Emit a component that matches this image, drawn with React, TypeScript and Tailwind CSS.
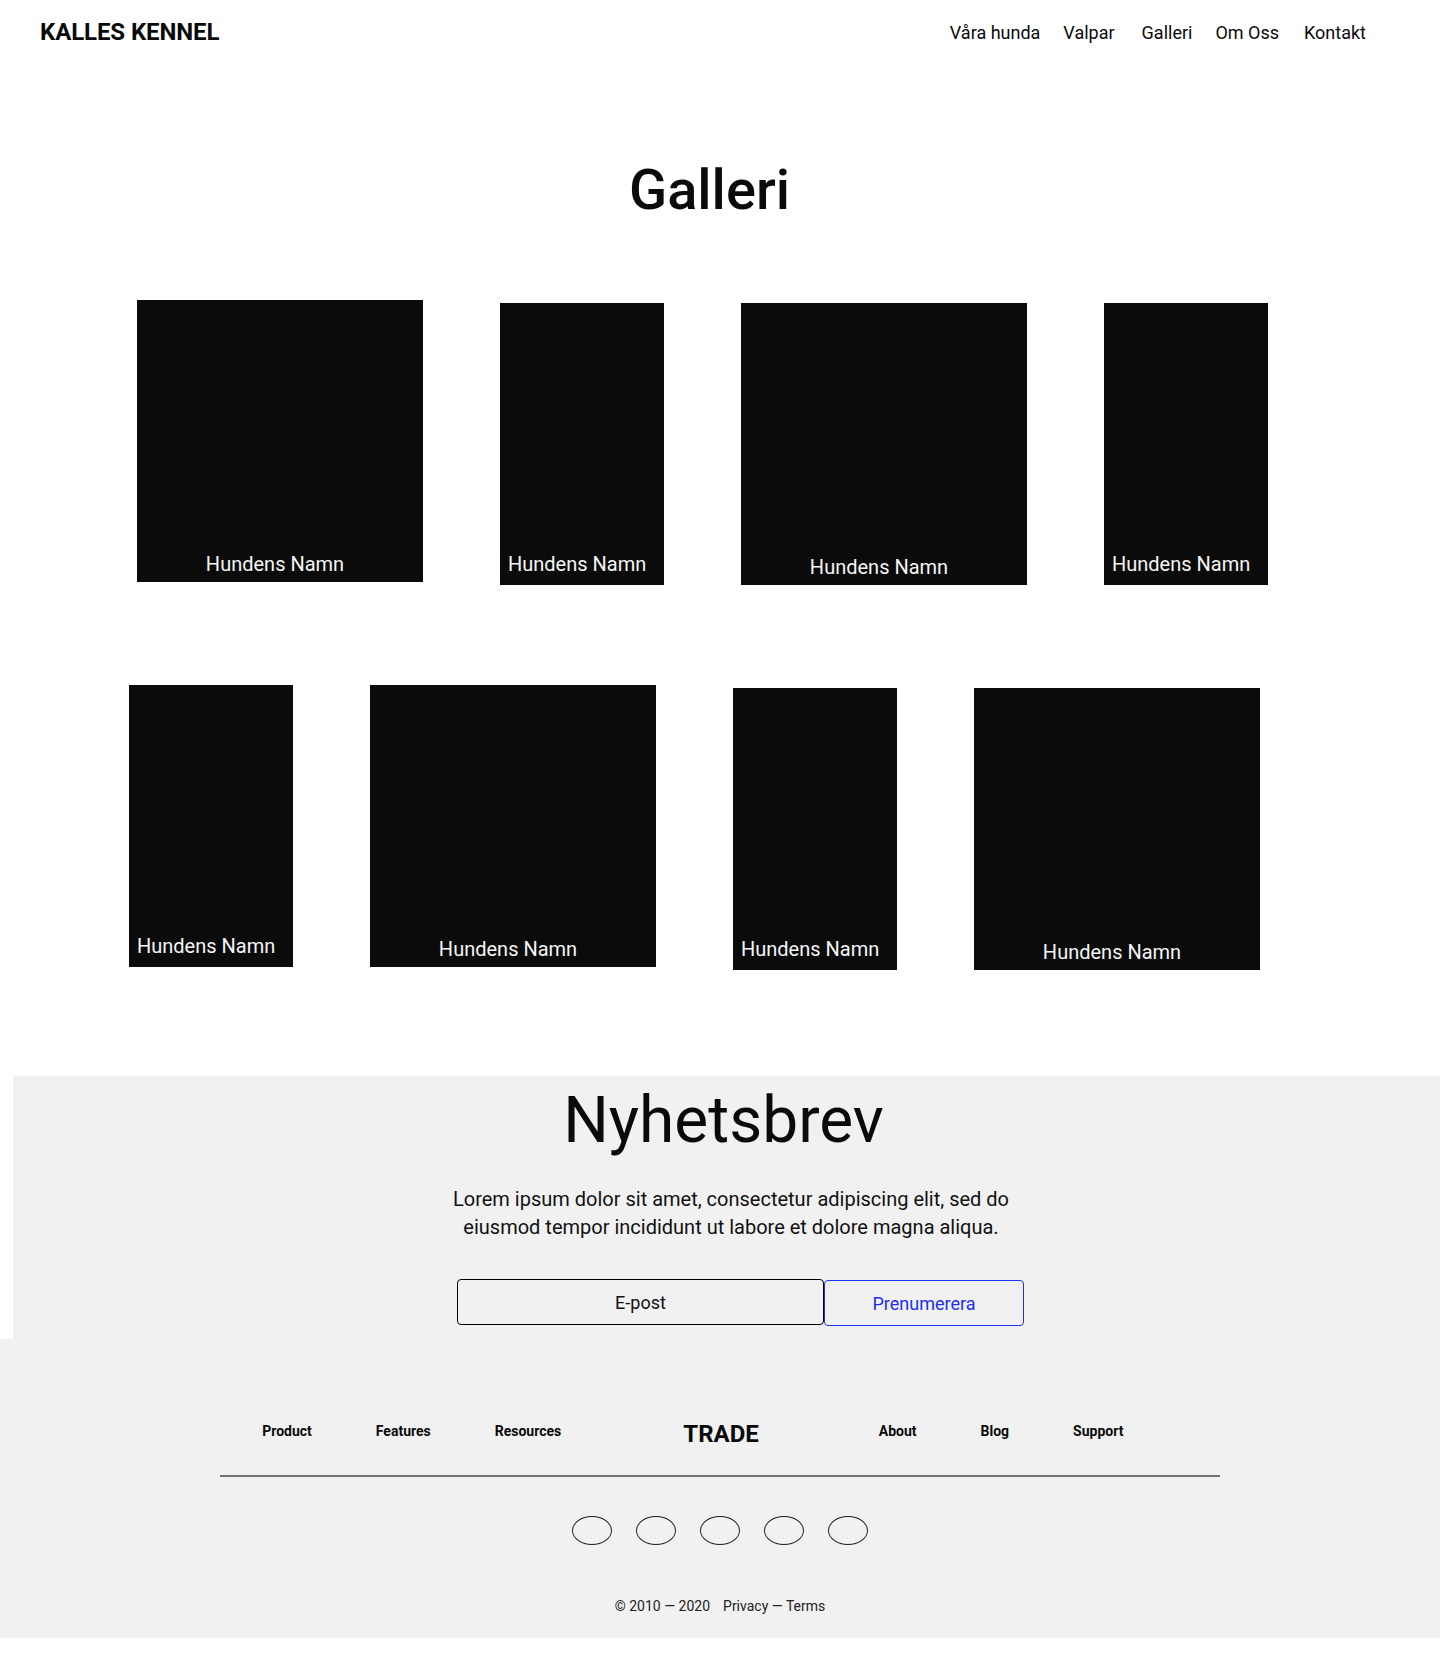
const nav = [
  { label: "Våra hunda", cls: "" },
  { label: "Valpar", cls: "ml-[23px]" },
  { label: "Galleri", cls: "ml-[27px]" },
  { label: "Om Oss", cls: "ml-[23px]" },
  { label: "Kontakt", cls: "ml-[25px]" },
];

type Dog = { wide: boolean; center: boolean; drop: boolean };

const rowOne: Dog[] = [
  { wide: true, center: true, drop: false },
  { wide: false, center: false, drop: true },
  { wide: true, center: true, drop: true },
  { wide: false, center: false, drop: true },
];

const rowTwo: Dog[] = [
  { wide: false, center: false, drop: false },
  { wide: true, center: true, drop: false },
  { wide: false, center: false, drop: true },
  { wide: true, center: true, drop: true },
];

function DogCard({ dog }: { dog: Dog }) {
  return (
    <div
      className={`flex h-[282px] flex-none flex-col justify-end bg-[#0b0b0b] ${
        dog.wide ? "w-[286px]" : "w-[164px]"
      } ${dog.drop ? "mt-[3px]" : ""}`}
    >
      <div
        className={`text-[20px] leading-none text-[#f5f5f5] ${
          dog.center ? "pb-[8px] pr-[10px] text-center" : "pb-[11px] pl-[8px]"
        }`}
      >
        Hundens Namn
      </div>
    </div>
  );
}

export default function App() {
  return (
    <div className="min-h-[1658px] bg-white font-['Roboto',sans-serif] text-[#0a0a0a]">
      {/* Sidhuvud */}
      <header className="flex items-start justify-between pl-[40px] pr-[74px] pt-[20px]">
        <div className="text-[24px] font-bold leading-none tracking-[-0.1px]">KALLES KENNEL</div>
        <nav className="mt-[4px] flex items-baseline text-[18px] leading-none">
          {nav.map((n) => (
            <span key={n.label} className={n.cls}>
              {n.label}
            </span>
          ))}
        </nav>
      </header>

      <h1 className="mt-[118px] pr-[21px] text-center text-[56px] font-medium leading-none">Galleri</h1>

      {/* Galleri */}
      <div className="mt-[82px] flex items-start gap-[77px] pl-[137px]">
        {rowOne.map((d, i) => (
          <DogCard key={i} dog={d} />
        ))}
      </div>
      <div className="mt-[100px] flex items-start gap-[77px] pl-[129px]">
        {rowTwo.map((d, i) => (
          <DogCard key={i} dog={d} />
        ))}
      </div>

      {/* Nyhetsbrev */}
      <section className="ml-[13px] mt-[106px] flex h-[263px] flex-col items-center bg-[#f1f1f1] pt-[13px]">
        <h2 className="pr-[6px] text-[64px] leading-none">Nyhetsbrev</h2>
        <p className="mt-[32px] pl-[9px] text-center text-[20px] leading-[28px] text-[#111]">
          Lorem ipsum dolor sit amet, consectetur adipiscing elit, sed do
          <br />
          eiusmod tempor incididunt ut labore et dolore magna aliqua.
        </p>
        <div className="mt-[38px] flex items-start pl-[28px]">
          <input
            placeholder="E-post"
            className="h-[46px] w-[367px] rounded-[4px] border border-black bg-transparent text-center text-[18px] text-[#111] outline-none placeholder:text-[#111]"
          />
          <button className="mt-[1px] h-[46px] w-[200px] rounded-[4px] border border-[#1d2ff5] text-[18px] text-[#1d2ff5]">
            Prenumerera
          </button>
        </div>
      </section>

      {/* Sidfot */}
      <footer className="flex h-[299px] flex-col bg-[#f1f1f1] pt-[83px]">
        <div className="grid grid-cols-[1fr_auto_1fr] items-start">
          <div className="mt-[2px] flex justify-end gap-16 text-[14px] font-bold leading-none">
            <span>Product</span>
            <span>Features</span>
            <span>Resources</span>
          </div>
          <div className="pl-[122px] pr-[120px] text-[24px] font-bold leading-none">TRADE</div>
          <div className="mt-[2px] flex gap-16 text-[14px] font-bold leading-none">
            <span>About</span>
            <span>Blog</span>
            <span>Support</span>
          </div>
        </div>
        <div className="mx-auto mt-[29px] h-[2px] w-[1000px] bg-[#737373]" />
        <div className="mt-[39px] flex justify-center gap-6">
          {[0, 1, 2, 3, 4].map((i) => (
            <span key={i} className="h-[29px] w-10 rounded-[50%] border border-[#222]" />
          ))}
        </div>
        <div className="mt-[54px] flex justify-center gap-[13px] text-[14px] leading-none text-[#222]">
          <span>© 2010 — 2020</span>
          <span>Privacy — Terms</span>
        </div>
      </footer>
    </div>
  );
}
